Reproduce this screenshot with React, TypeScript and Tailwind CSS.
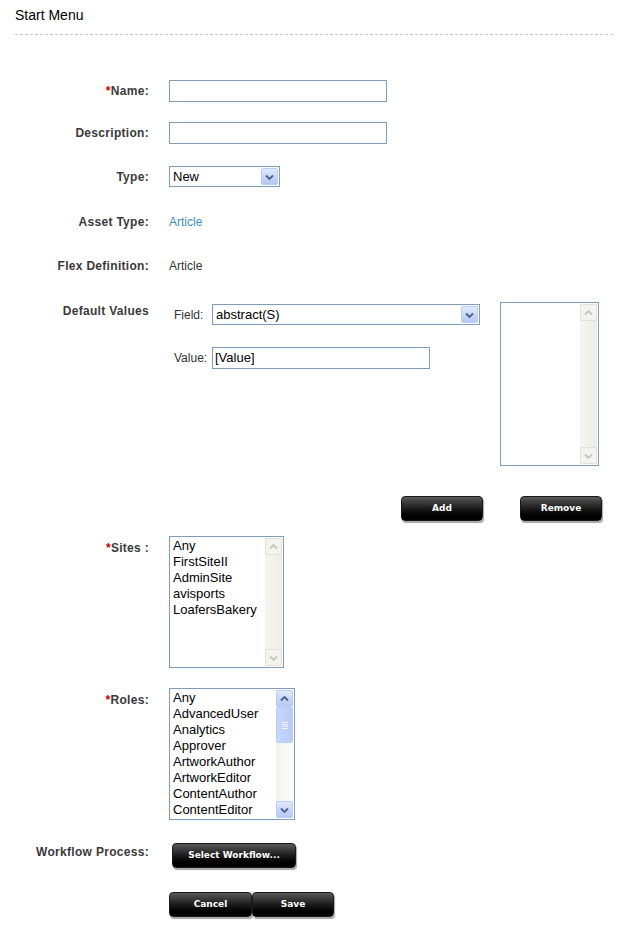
import React from 'react';

const labelCls =
  "w-[150px] shrink-0 pr-[1px] text-right font-['Liberation_Sans',Arial,sans-serif] text-[12px] font-bold tracking-[0.3px] text-[#3a3a3a]";

function Req() {
  return <span className="text-[#cc0000]">*</span>;
}

function Chevron({ up = false, color = '#4d6185' }: { up?: boolean; color?: string }) {
  return (
    <svg width="9" height="6" viewBox="0 0 9 6" className={up ? 'rotate-180' : ''}>
      <path d="M1 1.5 L4.5 5 L8 1.5" fill="none" stroke={color} strokeWidth="1.8" />
    </svg>
  );
}

function DropButton() {
  return (
    <div className="flex h-full w-[17px] items-center justify-center rounded-[2px] border border-[#b9cdf6] bg-gradient-to-b from-[#dfe9ff] to-[#b4c8f4]">
      <Chevron />
    </div>
  );
}

function Select({ value, width }: { value: string; width: string }) {
  return (
    <div className={`flex h-[21px] items-stretch border border-[#7f9db9] bg-white p-[1px] ${width}`}>
      <div className="flex flex-1 items-center pl-[2px] font-['Liberation_Sans',Arial,sans-serif] text-[13px] text-black">
        {value}
      </div>
      <DropButton />
    </div>
  );
}

function TextInput({ width, value = '' }: { width: string; value?: string }) {
  return (
    <div
      className={`flex h-[22px] items-center border border-[#7f9db9] bg-white pl-[2px] font-['Liberation_Sans',Arial,sans-serif] text-[13px] text-black ${width}`}
    >
      {value}
    </div>
  );
}

// Greyed-out scrollbar of an inactive list box
function FlatScrollbar() {
  return (
    <div className="flex w-[17px] flex-col justify-between bg-gradient-to-r from-[#f6f5ef] to-[#eeede5]">
      <div className="flex h-[17px] items-center justify-center rounded-[2px] border border-[#e2e1d8] bg-[#f4f3ee]">
        <Chevron up color="#c9c8c0" />
      </div>
      <div className="flex h-[17px] items-center justify-center rounded-[2px] border border-[#e2e1d8] bg-[#f4f3ee]">
        <Chevron color="#c9c8c0" />
      </div>
    </div>
  );
}

// Active blue scrollbar with a thumb
function BlueScrollbar() {
  return (
    <div className="flex w-[17px] flex-col bg-gradient-to-r from-[#f3f2ec] to-[#fdfdfa]">
      <div className="flex h-[17px] items-center justify-center rounded-[2px] border border-[#b9cdf6] bg-gradient-to-b from-[#dfe9ff] to-[#b4c8f4]">
        <Chevron up />
      </div>
      <div className="flex h-[36px] flex-col items-center justify-center gap-[1px] rounded-[2px] border border-[#b9cdf6] bg-gradient-to-r from-[#c8d8fc] to-[#b6cbf8]">
        <div className="h-[1px] w-[6px] bg-[#eef3fe]" />
        <div className="h-[1px] w-[6px] bg-[#eef3fe]" />
        <div className="h-[1px] w-[6px] bg-[#eef3fe]" />
        <div className="h-[1px] w-[6px] bg-[#eef3fe]" />
      </div>
      <div className="flex-1" />
      <div className="flex h-[17px] items-center justify-center rounded-[2px] border border-[#b9cdf6] bg-gradient-to-b from-[#dfe9ff] to-[#b4c8f4]">
        <Chevron />
      </div>
    </div>
  );
}

function ListBox({
  items,
  width,
  height,
  active = false,
}: {
  items: string[];
  width: string;
  height: string;
  active?: boolean;
}) {
  return (
    <div className={`flex border border-[#7f9db9] bg-white ${width} ${height}`}>
      <div className="flex-1 overflow-hidden pl-[3px] pt-[1px] font-['Liberation_Sans',Arial,sans-serif] text-[13px] leading-[16px] text-black">
        {items.map((it) => (
          <div key={it}>{it}</div>
        ))}
      </div>
      <div className="flex py-[1px] pr-[1px]">{active ? <BlueScrollbar /> : <FlatScrollbar />}</div>
    </div>
  );
}

function DarkButton({ children, width }: { children: React.ReactNode; width: string }) {
  return (
    <button
      className={`flex h-[25px] items-center justify-center rounded-[4px] border border-[#1a1a1a] bg-gradient-to-b from-[#5a5a5a] via-[#1c1c1c] to-[#000000] font-['DejaVu_Sans',Verdana,sans-serif] text-[9px] font-bold text-white shadow-[1px_2px_1px_rgba(0,0,0,0.35)] ${width}`}
    >
      {children}
    </button>
  );
}

export default function App() {
  return (
    <div className="min-h-[950px] bg-white">
      <div className="pl-[15px] pr-[9px] pt-[6px]">
        <h1 className="font-['Liberation_Sans',Arial,sans-serif] text-[14px] leading-[18px] text-black">Start Menu</h1>
        <div className="mt-[10px] border-t border-dashed border-[#c8c8c8]" />
      </div>

      <div className="flex flex-col">
        <div className="mt-[45px] flex h-[22px] items-center gap-[19px]">
          <div className={labelCls}>
            <Req />
            Name:
          </div>
          <TextInput width="w-[218px]" />
        </div>

        <div className="mt-[20px] flex h-[22px] items-center gap-[19px]">
          <div className={labelCls}>Description:</div>
          <TextInput width="w-[218px]" />
        </div>

        <div className="mt-[22px] flex h-[21px] items-center gap-[19px]">
          <div className={labelCls}>Type:</div>
          <Select value="New" width="w-[111px]" />
        </div>

        <div className="mt-[25px] flex h-[20px] items-center gap-[19px]">
          <div className={labelCls}>Asset Type:</div>
          <span className="font-['Liberation_Sans',Arial,sans-serif] text-[12px] text-[#3d8ec2]">Article</span>
        </div>

        <div className="mt-[24px] flex h-[20px] items-center gap-[19px]">
          <div className={labelCls}>Flex Definition:</div>
          <span className="font-['Liberation_Sans',Arial,sans-serif] text-[12px] text-[#333]">Article</span>
        </div>

        <div className="mt-[26px] flex gap-[19px]">
          <div className={labelCls}>Default Values</div>
          <div className="flex">
            <div className="w-[331px] pl-[5px] pt-[2px] font-['Liberation_Sans',Arial,sans-serif] text-[12px] text-[#333]">
              <div className="flex h-[21px] items-center">
                <span className="w-[38px]">Field:</span>
                <Select value="abstract(S)" width="w-[268px]" />
              </div>
              <div className="mt-[22px] flex h-[22px] items-center">
                <span className="w-[38px]">Value:</span>
                <TextInput width="w-[218px]" value="[Value]" />
              </div>
            </div>
            <ListBox items={[]} width="w-[99px]" height="h-[164px]" />
          </div>
        </div>

        <div className="mt-[30px] flex pl-[401px]">
          <DarkButton width="w-[82px]">Add</DarkButton>
          <div className="ml-[37px]">
            <DarkButton width="w-[82px]">Remove</DarkButton>
          </div>
        </div>

        <div className="mt-[15px] flex gap-[19px]">
          <div className={`${labelCls} pt-[3px]`}>
            <Req />
            Sites :
          </div>
          <ListBox
            items={['Any', 'FirstSiteII', 'AdminSite', 'avisports', 'LoafersBakery']}
            width="w-[115px]"
            height="h-[132px]"
          />
        </div>

        <div className="mt-[20px] flex gap-[19px]">
          <div className={`${labelCls} pt-[3px]`}>
            <Req />
            Roles:
          </div>
          <ListBox
            items={[
              'Any',
              'AdvancedUser',
              'Analytics',
              'Approver',
              'ArtworkAuthor',
              'ArtworkEditor',
              'ContentAuthor',
              'ContentEditor',
            ]}
            width="w-[126px]"
            height="h-[132px]"
            active
          />
        </div>

        <div className="mt-[23px] flex gap-[19px]">
          <div className={labelCls}>Workflow Process:</div>
          <div className="pl-[3px]">
            <DarkButton width="w-[124px]">Select Workflow...</DarkButton>
          </div>
        </div>

        <div className="mt-[24px] flex pl-[169px]">
          <DarkButton width="w-[83px]">Cancel</DarkButton>
          <DarkButton width="w-[82px]">Save</DarkButton>
        </div>
      </div>
    </div>
  );
}
